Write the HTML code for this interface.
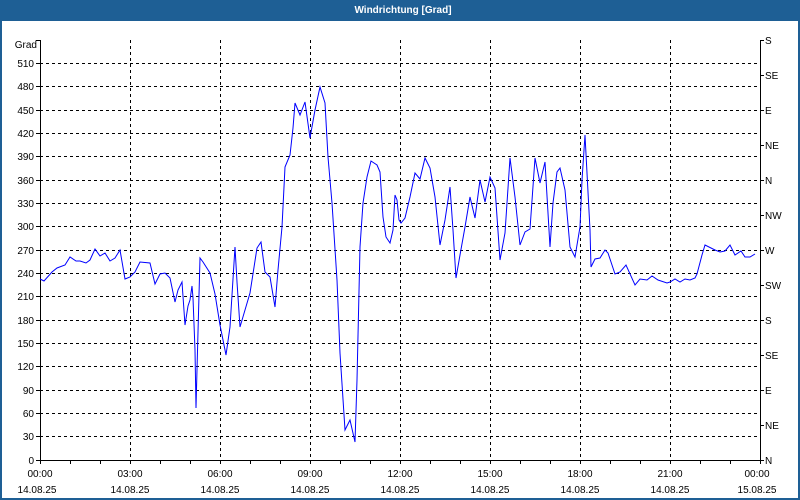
<!DOCTYPE html>
<html><head><style>
html,body{margin:0;padding:0;width:800px;height:500px;overflow:hidden;background:#1e5f95;}
svg{display:block;font-family:"Liberation Sans","DejaVu Sans",sans-serif;}
</style></head><body>
<svg width="800" height="500" viewBox="0 0 800 500">
<rect x="0" y="0" width="800" height="500" fill="#1e5f95"/>
<rect x="2" y="21" width="796" height="477" fill="#ffffff"/>
<text x="403" y="13" fill="#fff" font-size="10" font-weight="bold" text-anchor="middle">Windrichtung [Grad]</text>
<g stroke="#000" stroke-width="1" stroke-dasharray="3,3" fill="none">
<path d="M40 63.5H760M40 86.5H760M40 110.5H760M40 133.5H760M40 156.5H760M40 180.5H760M40 203.5H760M40 226.5H760M40 250.5H760M40 273.5H760M40 296.5H760M40 320.5H760M40 343.5H760M40 366.5H760M40 390.5H760M40 413.5H760M40 436.5H760"/>
<path d="M130.5 40V460M220.5 40V460M310.5 40V460M400.5 40V460M490.5 40V460M580.5 40V460M670.5 40V460"/>
</g>
<g stroke="#000" stroke-width="1" fill="none">
<path d="M40.5 40V464M760.5 40V460M36 460.5H760M36 40.5H40"/>
<path d="M70.5 460v4M100.5 460v4M130.5 460v4M160.5 460v4M190.5 460v4M220.5 460v4M250.5 460v4M280.5 460v4M310.5 460v4M340.5 460v4M370.5 460v4M400.5 460v4M430.5 460v4M460.5 460v4M490.5 460v4M520.5 460v4M550.5 460v4M580.5 460v4M610.5 460v4M640.5 460v4M670.5 460v4M700.5 460v4M730.5 460v4M760.5 460v4"/>
<path d="M36 63.5h4M36 86.5h4M36 110.5h4M36 133.5h4M36 156.5h4M36 180.5h4M36 203.5h4M36 226.5h4M36 250.5h4M36 273.5h4M36 296.5h4M36 320.5h4M36 343.5h4M36 366.5h4M36 390.5h4M36 413.5h4M36 436.5h4"/>
<path d="M760 75.5h4M760 110.5h4M760 145.5h4M760 180.5h4M760 215.5h4M760 250.5h4M760 285.5h4M760 320.5h4M760 355.5h4M760 390.5h4M760 425.5h4M760 460.5h4M760 40.5h4"/>
</g>
<g font-size="10" fill="#000" text-anchor="end">
<text x="37" y="48">Grad</text>
<text x="34" y="67">510</text><text x="34" y="90">480</text><text x="34" y="114">450</text><text x="34" y="137">420</text><text x="34" y="160">390</text><text x="34" y="184">360</text><text x="34" y="207">330</text><text x="34" y="230">300</text><text x="34" y="254">270</text><text x="34" y="277">240</text><text x="34" y="300">210</text><text x="34" y="324">180</text><text x="34" y="347">150</text><text x="34" y="370">120</text><text x="34" y="394">90</text><text x="34" y="417">60</text><text x="34" y="440">30</text><text x="34" y="464">0</text>
</g>
<g font-size="10" fill="#000">
<text x="765" y="44">S</text><text x="765" y="79">SE</text><text x="765" y="114">E</text><text x="765" y="149">NE</text><text x="765" y="184">N</text><text x="765" y="219">NW</text><text x="765" y="254">W</text><text x="765" y="289">SW</text><text x="765" y="324">S</text><text x="765" y="359">SE</text><text x="765" y="394">E</text><text x="765" y="429">NE</text><text x="765" y="464">N</text>
</g>
<g font-size="10" fill="#000" text-anchor="middle">
<text x="40" y="477">00:00</text><text x="130" y="477">03:00</text><text x="220" y="477">06:00</text><text x="310" y="477">09:00</text><text x="400" y="477">12:00</text><text x="490" y="477">15:00</text><text x="580" y="477">18:00</text><text x="670" y="477">21:00</text><text x="757" y="477">00:00</text>
<text x="37" y="493">14.08.25</text><text x="130" y="493">14.08.25</text><text x="220" y="493">14.08.25</text><text x="310" y="493">14.08.25</text><text x="400" y="493">14.08.25</text><text x="490" y="493">14.08.25</text><text x="580" y="493">14.08.25</text><text x="670" y="493">14.08.25</text><text x="757" y="493">15.08.25</text>
</g>
<polyline fill="none" stroke="#0000ff" stroke-width="1" points="40,279 44,281 52,272 57,268 65,265 70,257 76,261 80,261 86,263 90,260 95,249 100,256 105,253 110,261 115,258 120,250 125,279 130,277 135,272 140,262 150,263 155,284 160,274 165,273 170,278 175,302 178,290 182,282 185,325 188,306 190,300 192,286 193,298 195,350 196,408 198,332 200,258 203,262 210,273 215,294 220,325 226,355 230,327 235,247 237,282 240,327 250,293 257,248 261,242 265,272 270,277 275,307 278,270 282,227 285,167 290,155 293,128 295,103 300,115 305,102 310,138 315,110 320,87 325,103 328,157 332,203 337,280 340,353 345,430 350,420 355,442 357,380 360,247 363,203 367,177 371,161 377,165 380,172 383,217 386,237 390,243 393,230 395,195 397,200 399,220 401,223 405,218 410,197 415,173 420,179 425,158 430,168 435,197 440,245 445,220 450,187 453,230 456,278 460,255 465,227 470,197 475,218 480,180 485,202 490,177 495,188 500,260 505,233 510,158 515,197 520,245 525,232 530,229 535,158 540,183 545,162 550,247 553,203 557,172 560,168 565,190 570,247 575,257 580,227 582,180 585,135 590,230 591,267 595,259 600,258 605,250 608,253 615,274 620,272 626,265 635,285 640,279 647,280 652,276 658,280 667,283 670,282 675,279 680,282 685,279 690,280 695,278 697,274 702,255 705,245 715,250 720,252 725,251 730,245 735,255 741,251 745,257 750,257 755,254"/>
</svg>
</body></html>
